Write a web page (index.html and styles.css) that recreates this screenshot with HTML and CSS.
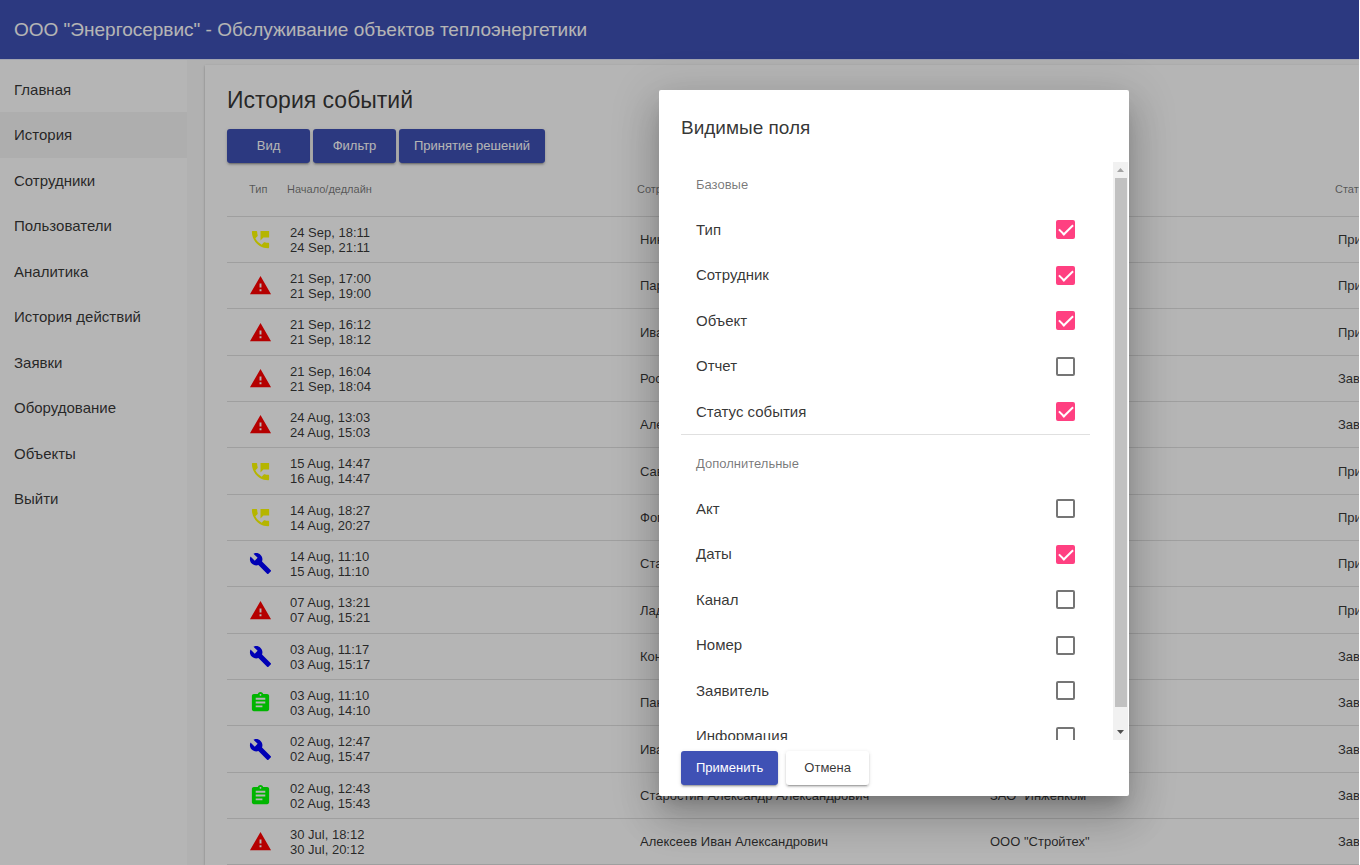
FILE: index.html
```html
<!DOCTYPE html>
<html lang="ru">
<head>
<meta charset="utf-8">
<title>История событий</title>
<link rel="stylesheet" href="styles.css">
</head>
<body>
<svg class="sprite" aria-hidden="true">
  <symbol id="call" viewBox="0 0 24 24"><path d="M20 15.5c-1.25 0-2.45-.2-3.57-.57-.35-.11-.74-.03-1.02.24l-2.2 2.2c-2.83-1.44-5.15-3.75-6.59-6.58l2.2-2.21c.28-.27.36-.66.25-1.01C8.7 6.45 8.5 5.25 8.5 4c0-.55-.45-1-1-1H4c-.55 0-1 .45-1 1 0 9.39 7.61 17 17 17 .55 0 1-.45 1-1v-3.5c0-.55-.45-1-1-1zM12 3v10l3-3h6V3h-9z"/></symbol>
  <symbol id="alarm" viewBox="0 0 24 24"><path d="M1 21h22L12 2 1 21zm12-3h-2v-2h2v2zm0-4h-2v-4h2v4z"/></symbol>
  <symbol id="repair" viewBox="0 0 24 24"><path d="M22.7 19l-9.1-9.1c.9-2.3.4-5-1.5-6.9-2-2-5-2.4-7.4-1.3L9 6 6 9 1.6 4.7C.4 7.1.9 10.1 2.9 12.1c1.9 1.9 4.6 2.4 6.9 1.5l9.1 9.1c.4.4 1 .4 1.4 0l2.3-2.3c.5-.4.5-1.1.1-1.4z"/></symbol>
  <symbol id="task" viewBox="0 0 24 24"><path d="M19 3h-4.18C14.4 1.84 13.3 1 12 1c-1.3 0-2.4.84-2.82 2H5c-1.1 0-2 .9-2 2v14c0 1.1.9 2 2 2h14c1.1 0 2-.9 2-2V5c0-1.1-.9-2-2-2zm-7 0c.55 0 1 .45 1 1s-.45 1-1 1-1-.45-1-1 .45-1 1-1zm2 14H7v-2h7v2zm3-4H7v-2h10v2zm0-4H7V7h10v2z"/></symbol>
</svg>

<div class="app">
  <header class="toolbar">ООО "Энергосервис" - Обслуживание объектов теплоэнергетики</header>
  <div class="layout">
    <nav class="sidebar">
      <a class="nav-link" href="#">Главная</a>
      <a class="nav-link active" href="#">История</a>
      <a class="nav-link" href="#">Сотрудники</a>
      <a class="nav-link" href="#">Пользователи</a>
      <a class="nav-link" href="#">Аналитика</a>
      <a class="nav-link" href="#">История действий</a>
      <a class="nav-link" href="#">Заявки</a>
      <a class="nav-link" href="#">Оборудование</a>
      <a class="nav-link" href="#">Объекты</a>
      <a class="nav-link" href="#">Выйти</a>
    </nav>
    <main class="card">
      <h1 class="page-title">История событий</h1>
      <div class="actions">
        <button class="btn primary" type="button">Вид</button>
        <button class="btn primary" type="button">Фильтр</button>
        <button class="btn primary" type="button">Принятие решений</button>
      </div>
      <table class="events">
        <colgroup><col class="col-type"><col class="col-data"><col class="col-data"><col class="col-object"><col class="col-data"></colgroup>
        <thead>
          <tr><th>Тип</th><th>Начало/дедлайн</th><th>Сотрудник</th><th>Объект</th><th>Статус</th></tr>
        </thead>
        <tbody>
          <tr><td><svg class="icon call"><use href="#call"/></svg></td><td>24 Sep, 18:11<br>24 Sep, 21:11</td><td>Никитин</td><td></td><td>Принято</td></tr>
          <tr><td><svg class="icon alarm"><use href="#alarm"/></svg></td><td>21 Sep, 17:00<br>21 Sep, 19:00</td><td>Парфенов</td><td></td><td>Принято</td></tr>
          <tr><td><svg class="icon alarm"><use href="#alarm"/></svg></td><td>21 Sep, 16:12<br>21 Sep, 18:12</td><td>Иванов</td><td></td><td>Принято</td></tr>
          <tr><td><svg class="icon alarm"><use href="#alarm"/></svg></td><td>21 Sep, 16:04<br>21 Sep, 18:04</td><td>Россов</td><td></td><td>Завершено</td></tr>
          <tr><td><svg class="icon alarm"><use href="#alarm"/></svg></td><td>24 Aug, 13:03<br>24 Aug, 15:03</td><td>Алексеев</td><td></td><td>Завершено</td></tr>
          <tr><td><svg class="icon call"><use href="#call"/></svg></td><td>15 Aug, 14:47<br>16 Aug, 14:47</td><td>Савин</td><td></td><td>Принято</td></tr>
          <tr><td><svg class="icon call"><use href="#call"/></svg></td><td>14 Aug, 18:27<br>14 Aug, 20:27</td><td>Фомин</td><td></td><td>Принято</td></tr>
          <tr><td><svg class="icon repair"><use href="#repair"/></svg></td><td>14 Aug, 11:10<br>15 Aug, 11:10</td><td>Старостин</td><td></td><td>Принято</td></tr>
          <tr><td><svg class="icon alarm"><use href="#alarm"/></svg></td><td>07 Aug, 13:21<br>07 Aug, 15:21</td><td>Ладов</td><td></td><td>Принято</td></tr>
          <tr><td><svg class="icon repair"><use href="#repair"/></svg></td><td>03 Aug, 11:17<br>03 Aug, 15:17</td><td>Конев</td><td></td><td>Завершено</td></tr>
          <tr><td><svg class="icon task"><use href="#task"/></svg></td><td>03 Aug, 11:10<br>03 Aug, 14:10</td><td>Панин</td><td></td><td>Завершено</td></tr>
          <tr><td><svg class="icon repair"><use href="#repair"/></svg></td><td>02 Aug, 12:47<br>02 Aug, 15:47</td><td>Иванов</td><td></td><td>Завершено</td></tr>
          <tr><td><svg class="icon task"><use href="#task"/></svg></td><td>02 Aug, 12:43<br>02 Aug, 15:43</td><td>Старостин Александр Александрович</td><td>ЗАО "Инженком"</td><td>Завершено</td></tr>
          <tr><td><svg class="icon alarm"><use href="#alarm"/></svg></td><td>30 Jul, 18:12<br>30 Jul, 20:12</td><td>Алексеев Иван Александрович</td><td>ООО "Стройтех"</td><td>Завершено</td></tr>
        </tbody>
      </table>
    </main>
  </div>

  <div class="backdrop">
    <form class="dialog" role="dialog" aria-labelledby="dialog-title">
      <h2 class="dialog-title" id="dialog-title">Видимые поля</h2>
      <div class="dialog-body">
        <div class="fields">
          <h3 class="subheader">Базовые</h3>
          <div class="group">
            <label class="field">Тип<input class="check" type="checkbox" checked></label>
            <label class="field">Сотрудник<input class="check" type="checkbox" checked></label>
            <label class="field">Объект<input class="check" type="checkbox" checked></label>
            <label class="field">Отчет<input class="check" type="checkbox"></label>
            <label class="field">Статус события<input class="check" type="checkbox" checked></label>
          </div>
          <h3 class="subheader">Дополнительные</h3>
          <div class="group">
            <label class="field">Акт<input class="check" type="checkbox"></label>
            <label class="field">Даты<input class="check" type="checkbox" checked></label>
            <label class="field">Канал<input class="check" type="checkbox"></label>
            <label class="field">Номер<input class="check" type="checkbox"></label>
            <label class="field">Заявитель<input class="check" type="checkbox"></label>
            <label class="field">Информация<input class="check" type="checkbox"></label>
          </div>
        </div>
        <div class="scrollbar" aria-hidden="true">
          <svg class="arrow up" viewBox="0 0 15 16"><path d="M4 10h7L7.500 6z"/></svg>
          <div class="thumb"></div>
          <svg class="arrow down" viewBox="0 0 15 16"><path d="M4 6h7L7.500 10z"/></svg>
        </div>
      </div>
      <div class="dialog-actions">
        <button class="btn primary" type="button">Применить</button>
        <button class="btn" type="button">Отмена</button>
      </div>
    </form>
  </div>
</div>
</body>
</html>
```
FILE: styles.css
```css
* { box-sizing: border-box; }

body {
  margin: 0;
  background: #fff;
  color: rgba(0, 0, 0, .8);
  font-family: "Liberation Sans", Arial, sans-serif;
}

.sprite { display: none; }

.app {
  position: relative;
  display: flex;
  flex-direction: column;
  height: 100vh;
  margin-right: 1px;
  overflow: hidden;
}

.toolbar {
  flex: none;
  padding: 0 14px;
  border-bottom: 1px solid #e4e7fa;
  background: #3f51b5;
  color: #fff;
  font-size: 19px;
  line-height: 59px;
  white-space: nowrap;
}

.layout {
  flex: 1;
  display: flex;
  min-height: 0;
  background: #fafafa;
}

.sidebar {
  flex: none;
  width: 187px;
  padding-top: 7px;
  background: #fff;
}

.nav-link {
  display: block;
  padding: 0 14px;
  color: inherit;
  font-size: 15px;
  line-height: 45px;
  text-decoration: none;
}
.nav-link:nth-child(even) { line-height: 46px; }
.nav-link.active { background: #f5f5f5; }

.card {
  flex: 1;
  min-width: 0;
  margin: 5px 0 0 18px;
  padding: 21px 0 0 22px;
  background: #fff;
  box-shadow: 0 2px 1px -1px rgba(0, 0, 0, .2), 0 1px 1px rgba(0, 0, 0, .14), 0 1px 3px rgba(0, 0, 0, .2);
}

.page-title {
  margin: 0 0 15px;
  font-size: 23px;
  font-weight: 400;
  line-height: 28px;
}

.actions { display: flex; gap: 3px; }

.btn {
  min-width: 83px;
  padding: 0 15px;
  border: 0;
  border-radius: 3px;
  background: #fff;
  box-shadow: 0 3px 1px -2px rgba(0, 0, 0, .2), 0 2px 2px rgba(0, 0, 0, .14), 0 1px 4px rgba(0, 0, 0, .12);
  color: rgba(0, 0, 0, .8);
  font-family: inherit;
  font-size: 13px;
  line-height: 34px;
}
.btn.primary { background: #3f51b5; color: #fff; }

.events {
  width: 1458px;
  table-layout: fixed;
  border-collapse: separate;
  border-spacing: 0;
  font-size: 13px;
  line-height: 15px;
}
.col-type { width: 60px; }
.col-data { width: 350px; }
.col-object { width: 348px; }
.events th,
.events td {
  padding: 0;
  border-bottom: 1px solid rgba(0, 0, 0, .12);
  text-align: left;
}
.events th {
  height: 54px;
  color: rgba(0, 0, 0, .54);
  font-size: 11px;
  font-weight: 400;
}
.events td { height: 46px; padding-left: 3px; }
.events tr:nth-child(3n) td { height: 47px; }
.events th:first-child,
.events td:first-child { padding-left: 22px; }

.icon { display: block; width: 23px; height: 23px; }
.call { fill: #ff0; }
.alarm { fill: #f00; }
.repair { fill: #00f; }
.task { fill: #0f0; }

.backdrop {
  position: absolute;
  inset: 0;
  background: rgba(0, 0, 0, .29);
}

.dialog {
  position: absolute;
  top: 90px;
  left: 659px;
  width: 470px;
  border-radius: 2px;
  background: #fff;
  box-shadow: 0 11px 15px -7px rgba(0, 0, 0, .2), 0 24px 38px 3px rgba(0, 0, 0, .14), 0 9px 46px 8px rgba(0, 0, 0, .12);
}

.dialog-title {
  margin: 0;
  padding: 23px 22px 19px;
  font-size: 19px;
  font-weight: 400;
  line-height: 30px;
}

.dialog-body { display: flex; height: 578px; }

.fields {
  flex: 1;
  padding: 0 23px 0 22px;
  overflow: hidden;
}

.subheader {
  margin: 0;
  padding: 0 15px;
  color: rgba(0, 0, 0, .54);
  font-size: 13px;
  font-weight: 400;
  line-height: 45px;
}

.group + .subheader { margin-top: 6px; }
.group:has(+ .subheader) { border-bottom: 1px solid rgba(0, 0, 0, .12); }

.field {
  display: flex;
  align-items: center;
  justify-content: space-between;
  padding: 0 15px;
  font-size: 15px;
  line-height: 45px;
}
.field:nth-child(even) { line-height: 46px; }

.check {
  appearance: none;
  display: grid;
  place-items: center;
  width: 19px;
  height: 19px;
  margin: 0;
  border: 2px solid rgba(0, 0, 0, .54);
  border-radius: 2px;
}
.check:checked { border-color: #ff4081; background: #ff4081; }
.check:checked::before {
  content: "";
  width: 12px;
  height: 6px;
  margin-bottom: 3px;
  border: solid #fff;
  border-width: 0 0 2px 2px;
  transform: rotate(-45deg);
}

.scrollbar {
  display: flex;
  flex-direction: column;
  width: 15px;
  margin-right: 1px;
  background: #f1f1f1;
}
.arrow { flex: none; height: 16px; }
.arrow.up { fill: #a3a3a3; }
.arrow.down { margin-top: auto; fill: #505050; }
.thumb { height: 529px; margin: 0 1px 0 2px; background: #c1c1c1; }

.dialog-actions {
  display: flex;
  gap: 8px;
  padding: 11px 22px;
}
```
